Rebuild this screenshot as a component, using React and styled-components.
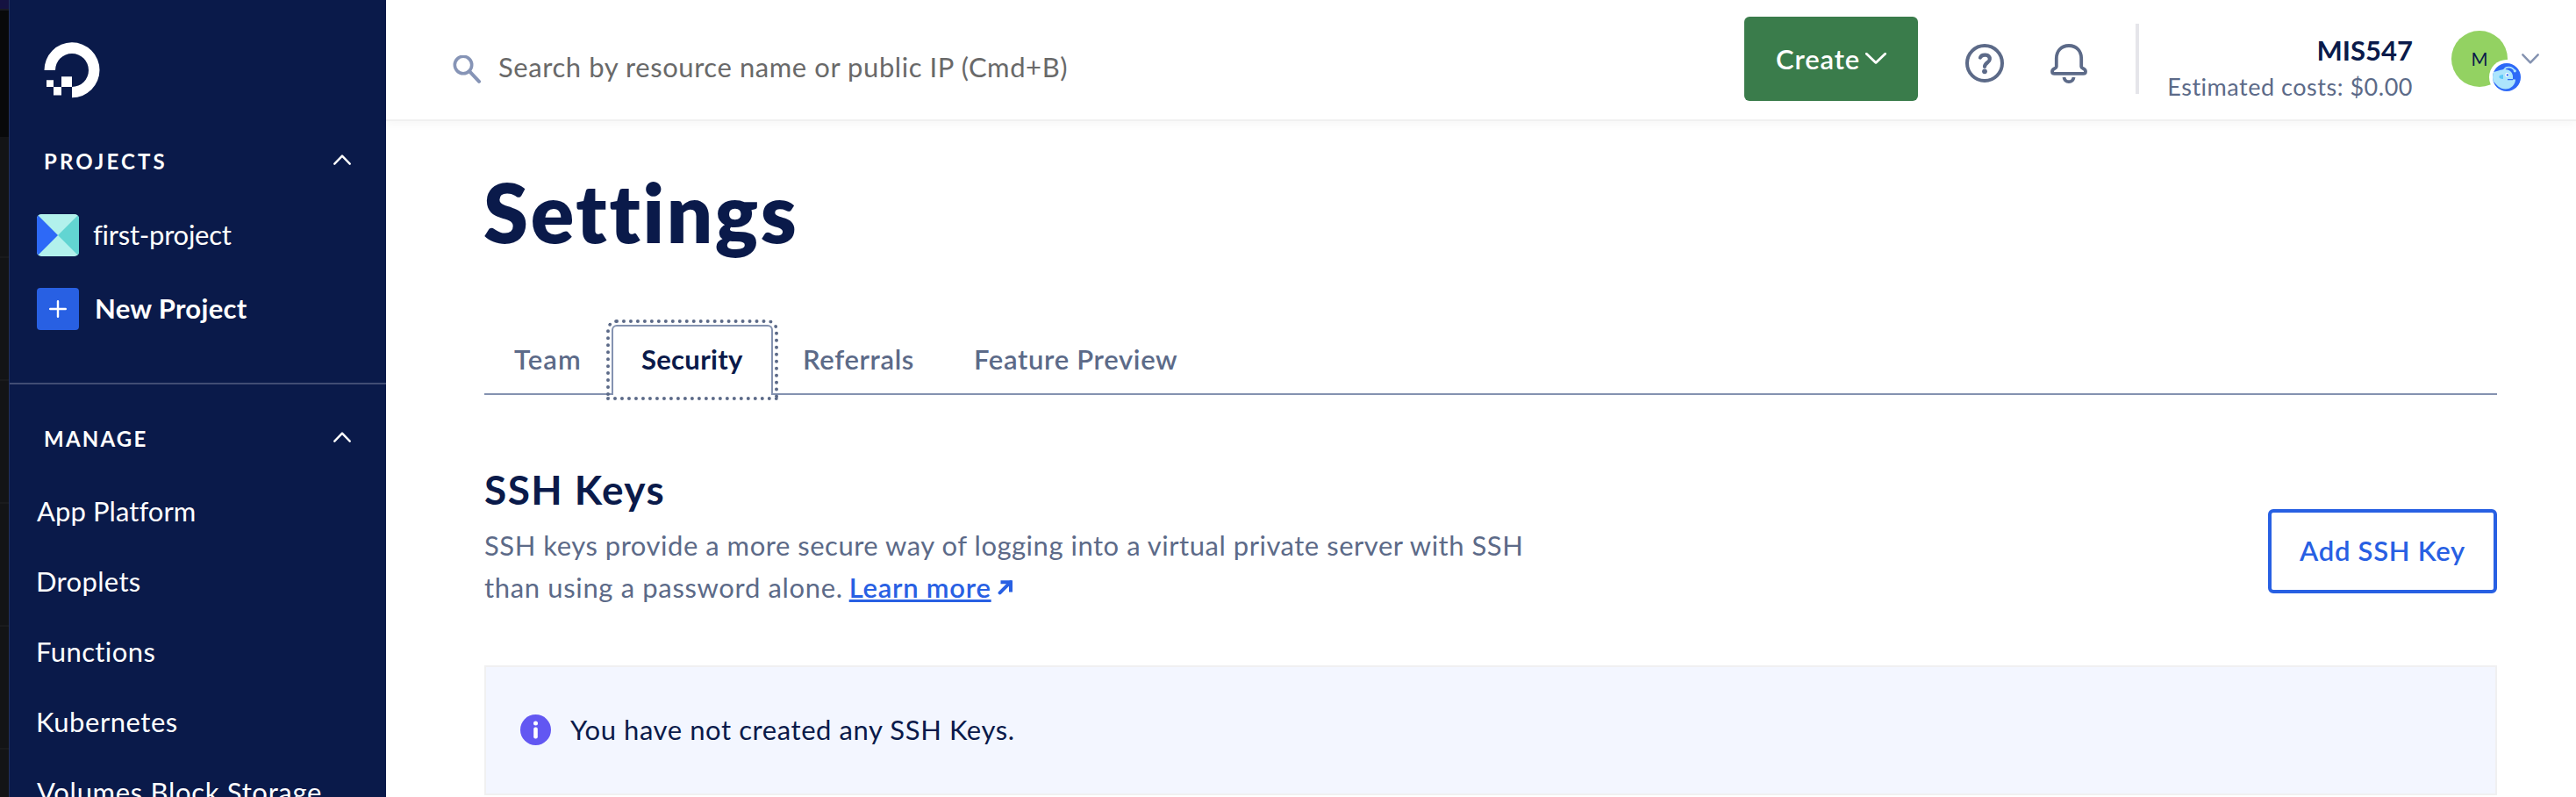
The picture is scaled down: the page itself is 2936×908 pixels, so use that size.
import React from "react";
import styled, { createGlobalStyle } from "styled-components";

const navy = "#0a1a4a";
const slate = "#5c6a88";
const steel = "#8492b0";
const blue = "#2860e3";

const GlobalStyle = createGlobalStyle`
  *, *::before, *::after { box-sizing: border-box; }
  html, body { margin: 0; background: #fff; }
  body {
    overflow: hidden;
    color: ${navy};
    font: 400 31px/48px Lato, "Open Sans", sans-serif;
  }
  h1, h2, p { margin: 0; }
  button, input { font: inherit; }
  svg { display: block; flex: none; }
`;

const Page = styled.div`
  display: flex;
  height: 908px;
  overflow: hidden;
`;

const Text = styled.span`
  font-weight: ${(p) => p.$weight || 400};
  letter-spacing: ${(p) => p.$track || 0}px;
  white-space: nowrap;
`;

/* ---------- sidebar ---------- */

const Edge = styled.div`
  flex: none;
  width: 10px;
  background:
    linear-gradient(#151241 0 10px, #191a22 10px 12px, #08090a 12px 156px, transparent 156px),
    repeating-linear-gradient(#131416 0 12px, #1a1b1d 12px 14px, #131416 14px 140px);
`;

const Sidebar = styled.aside`
  flex: none;
  display: flex;
  flex-direction: column;
  width: 430px;
  overflow: hidden;
  border-left: 1px solid #22315d;
  background: ${navy};
  color: #fff;
`;

const LogoLink = styled.a`
  display: block;
  padding: 48px 0 0 39px;
`;

const SectionHeader = styled.div`
  flex: none;
  display: flex;
  align-items: center;
  justify-content: space-between;
  height: 40px;
  margin-top: ${(p) => p.$top}px;
  padding: 1px 40px 0 39px;
  font-size: 24px;

  svg { margin-bottom: 3px; }
`;

const ProjectList = styled.div`
  display: flex;
  flex-direction: column;
  gap: 36px;
  padding: 41px 31px 60px;
  border-bottom: 2px solid #414d74;
`;

const ProjectRow = styled.a`
  display: flex;
  align-items: center;
  gap: ${(p) => p.$gap}px;
  height: 48px;

  span { padding-bottom: 2px; }
`;

const NewIcon = styled.div`
  display: grid;
  place-items: center;
  width: 48px;
  height: 48px;
  border-radius: 4px;
  background: ${blue};
`;

const NavList = styled.nav`
  display: flex;
  flex-direction: column;
  padding: 23px 0 0 31px;
`;

const NavItem = styled.a`
  flex: none;
  height: 80px;
  line-height: 80px;
  margin-left: ${(p) => p.$shift || 0}px;
`;

/* ---------- top bar ---------- */

const Content = styled.div`
  flex: 1;
  min-width: 0;
`;

const TopBar = styled.header`
  display: flex;
  align-items: center;
  height: 138px;
  padding: 0 42px 2px 76px;
  border-bottom: 2px solid #f0f0f0;
  box-shadow: 0 4px 10px rgba(0, 0, 0, 0.035);
`;

const Search = styled.label`
  flex: 1;
  display: flex;
  align-items: center;
  gap: 20px;
  padding-top: 18px;
  color: #696969;

  svg { margin-top: 5px; }
`;

const CreateButton = styled.button`
  display: flex;
  align-items: center;
  gap: 6px;
  width: 198px;
  height: 96px;
  padding: 0 0 1px 36px;
  border: 0;
  border-radius: 6px;
  background: #3a7c4b;
  color: #fff;

  svg { margin-bottom: 1px; }
`;

const IconButton = styled.a`
  margin: ${(p) => p.$margin};
`;

const Separator = styled.div`
  width: 4px;
  height: 80px;
  margin: 0 33px 0 55px;
  background: #e5e5ea;
`;

const Account = styled.div`
  display: flex;
  flex-direction: column;
  align-items: flex-end;
  width: 279px;
  margin: 21px 44px 0 0;
  line-height: 41px;
`;

const Costs = styled.div`
  color: ${slate};
  font-size: 27px;
`;

const Avatar = styled.div`
  position: relative;
  display: grid;
  place-items: center;
  width: 64px;
  height: 64px;
  margin-right: 16px;
  border-radius: 50%;
  background: #93d262;
  font-size: 20.5px;
  line-height: 24px;
`;

const Badge = styled.div`
  position: absolute;
  left: 43px;
  top: 33px;
  width: 40px;
  height: 40px;
  padding: 4px;
  border-radius: 50%;
  background: #fff;
`;

/* ---------- main area ---------- */

const Main = styled.main`
  padding: 54px 90px 0 111px;
`;

const Title = styled.h1`
  font-size: 92px;
  line-height: 100px;
`;

const Tabs = styled.div`
  display: flex;
  height: 80px;
  margin: 78px 0 0 1px;
  box-shadow: inset 0 -2px ${steel};
`;

const Tab = styled.a`
  width: ${(p) => p.$width}px;
  height: 80px;
  padding-left: 34px;
  color: ${slate};
  line-height: 78px;
`;

const ActiveTab = styled(Tab)`
  padding-left: 32px;
  border: 2px solid ${steel};
  border-bottom: 0;
  border-radius: 6px 6px 0 0;
  outline: 4px dotted ${slate};
  outline-offset: 2px;
  background: #fff;
  color: ${navy};
  line-height: 74px;
`;

const Section = styled.section`
  display: flex;
  align-items: flex-end;
  justify-content: space-between;
  margin: 80px 0 0 1px;
`;

const SectionTitle = styled.h2`
  font-size: 46px;
  line-height: 56px;
`;

const Description = styled.p`
  margin-top: 11px;
  color: ${slate};
`;

const Line = styled.span`
  display: flex;
  align-items: center;
`;

const LearnMore = styled.a`
  display: flex;
  align-items: center;
  gap: 7px;
  margin-left: 7px;
  color: ${blue};

  span {
    text-decoration: underline;
    text-decoration-thickness: 3px;
    text-underline-offset: 2px;
    text-decoration-skip-ink: none;
  }
`;

const OutlineButton = styled.button`
  width: 261px;
  height: 96px;
  margin-bottom: 17px;
  padding: 0 0 2px;
  border: 4px solid ${blue};
  border-radius: 6px;
  background: #fff;
  color: ${blue};
`;

const Notice = styled.div`
  display: flex;
  align-items: center;
  gap: 22px;
  height: 148px;
  margin: 65px 0 0 1px;
  padding: 0 0 1px 39px;
  border: 2px solid #f0f0f1;
  background: #f3f6ff;

  span { padding-bottom: 2px; }
`;

/* ---------- icons ---------- */

const Chevron = ({ up, width, height, color = "#fff", stroke = 2.4 }) => (
  <svg width={width} height={height} fill="none" stroke={color} strokeWidth={stroke} strokeLinecap="round" strokeLinejoin="round">
    {up ? (
      <path d={`M1.3 ${height - 1.3}L${width / 2} 1.6L${width - 1.3} ${height - 1.3}`} />
    ) : (
      <path d={`M1.3 1.3L${width / 2} ${height - 1.6}L${width - 1.3} 1.3`} />
    )}
  </svg>
);

const Logo = () => (
  <svg width="64" height="64" viewBox="0 0 64 64" fill="#fff">
    <path d="M.5 32A31.5 31.5 0 1 1 32 63.3V51A19 19 0 1 0 13 32Z" />
    <path d="M20 39.3h12V51H20zM11 51h9v9.5h-9zM3 43.3h8V51H3z" />
  </svg>
);

const ProjectIcon = () => (
  <svg width="48" height="48" viewBox="0 0 48 48">
    <clipPath id="tile"><rect width="48" height="48" rx="5" /></clipPath>
    <g clipPath="url(#tile)">
      <path fill="#b2f1ec" d="M0 0h48v48H0z" />
      <path fill="#2d69f7" d="M0 0l24 24L0 48z" />
      <path fill="#62d5d2" d="M48 0L24 24l24 24z" />
    </g>
  </svg>
);

const PlusIcon = () => (
  <svg width="20" height="20" stroke="#fff" strokeWidth="2.4" strokeLinecap="round">
    <path d="M10 1.2v17.6M1.2 10h17.6" />
  </svg>
);

const SearchIcon = () => (
  <svg width="32" height="32" fill="none" stroke="#8694b6" strokeWidth="3.6">
    <circle cx="12" cy="11" r="9.7" />
    <path d="M19 18.2L30 29.8" strokeWidth="4" strokeLinecap="round" />
  </svg>
);

const HelpIcon = () => (
  <svg width="44" height="44" fill="none" stroke={slate} strokeLinecap="round">
    <circle cx="22" cy="22" r="20" strokeWidth="4" />
    <path d="M17 15.6C18.4 11.6 27.8 11 27.8 17.4C27.8 21 22 21.6 22 26" strokeWidth="4.2" strokeLinejoin="round" />
    <circle cx="22" cy="31.3" r="2.9" fill={slate} stroke="none" />
  </svg>
);

const BellIcon = () => (
  <svg width="42" height="46" viewBox="0 0 42 46" fill="none" stroke={slate} strokeWidth="3.8" strokeLinejoin="round">
    <path d="M21 2C12 2 6.8 8.4 6.8 16.5V26C6.8 28.4 2 27.6 2 31.4C2 33 3 33.9 4.6 33.9H37.4C39 33.9 40 33 40 31.4C40 27.6 35.2 28.4 35.2 26V16.5C35.2 8.4 30 2 21 2Z" />
    <path d="M15.4 38C16 41.4 18.2 43.2 21 43.2S26 41.4 26.6 38" />
  </svg>
);

const FishIcon = () => (
  <svg width="32" height="32" viewBox="0 0 32 32">
    <clipPath id="fish"><circle cx="16" cy="16" r="16" /></clipPath>
    <g clipPath="url(#fish)">
      <path fill="#2d69f7" d="M0 0h32v32H0z" />
      <path fill="#ade5fc" d="M0 10C6 9.500 9 7 14 7C20 7 22.500 11 23 14.500V18.500H26C26 24.500 21 29.500 14.500 29.500C8 29.500 5 25 0 20Z" />
      <path fill="none" stroke="#ade5fc" strokeWidth="1.700" d="M13 7.500C15 3.500 22 3.500 25 8.500" />
      <circle cx="25.300" cy="8.800" r="1.600" fill="#ade5fc" />
      <path fill="#5cc8f8" d="M7.500 14.500Q9 13 12 13V18Q9 18 7.500 16.500Z" />
      <circle cx="16.600" cy="13.400" r="2.300" fill="#fff" />
      <circle cx="16.900" cy="13.400" r="1.200" fill="#2d69f7" />
      <path stroke="#2d69f7" strokeWidth="1.200" d="M17 18.600H23" />
    </g>
  </svg>
);

const ArrowIcon = () => (
  <svg width="18" height="18" viewBox="0 0 18 18" fill="none" stroke={blue} strokeWidth="4">
    <path d="M3.500 3.200H15V14.500" />
    <path d="M14.800 3.200L2.600 15.400" strokeLinecap="round" />
  </svg>
);

const InfoIcon = () => (
  <svg width="35" height="35" viewBox="0 0 35 35">
    <circle cx="17.500" cy="17.500" r="17.500" fill="#6257f2" />
    <circle cx="17.500" cy="9.900" r="2.500" fill="#fff" />
    <rect x="15.200" y="14.500" width="4.600" height="13" rx="2" fill="#fff" />
  </svg>
);

/* ---------- page ---------- */

const resources = [
  ["App Platform", 0.08, 0],
  ["Droplets", 0.33, -1],
  ["Functions", 0.4, -1],
  ["Kubernetes", 0.53, -1],
  ["Volumes Block Storage", 0.69, 0],
];

export default function App() {
  return (
    <Page>
      <GlobalStyle />
      <Edge />
      <Sidebar>
        <LogoLink><Logo /></LogoLink>
        <SectionHeader $top={51}>
          <Text $weight={700} $track={3.1}>PROJECTS</Text>
          <Chevron up width={20} height={12} />
        </SectionHeader>
        <ProjectList>
          <ProjectRow $gap={16}>
            <ProjectIcon />
            <Text $track={-0.25}>first-project</Text>
          </ProjectRow>
          <ProjectRow $gap={18}>
            <NewIcon><PlusIcon /></NewIcon>
            <Text $weight={700} $track={0.3}>New Project</Text>
          </ProjectRow>
        </ProjectList>
        <SectionHeader $top={41}>
          <Text $weight={700} $track={2.2}>MANAGE</Text>
          <Chevron up width={20} height={12} />
        </SectionHeader>
        <NavList>
          {resources.map(([label, track, shift]) => (
            <NavItem key={label} $shift={shift}><Text $track={track}>{label}</Text></NavItem>
          ))}
        </NavList>
      </Sidebar>

      <Content>
        <TopBar>
          <Search>
            <SearchIcon />
            <Text $track={0.57}>Search by resource name or public IP (Cmd+B)</Text>
          </Search>
          <CreateButton>
            <Text $weight={600} $track={0.85}>Create</Text>
            <Chevron width={24} height={13} stroke={2.8} />
          </CreateButton>
          <IconButton $margin="10px 0 0 54px"><HelpIcon /></IconButton>
          <IconButton $margin="11px 0 0 53px"><BellIcon /></IconButton>
          <Separator />
          <Account>
            <Text $weight={700}>MIS547</Text>
            <Costs><Text $track={0.52}>Estimated costs: $0.00</Text></Costs>
          </Account>
          <Avatar>
            <Text>M</Text>
            <Badge><FishIcon /></Badge>
          </Avatar>
          <Chevron width={20} height={12} color={steel} />
        </TopBar>

        <Main>
          <Title><Text $weight={800} $track={2.7}>Settings</Text></Title>
          <Tabs>
            <Tab $width={145}><Text $weight={600} $track={1.1}>Team</Text></Tab>
            <ActiveTab $width={184}><Text $weight={700} $track={0.3}>Security</Text></ActiveTab>
            <Tab $width={195}><Text $weight={600} $track={0.65}>Referrals</Text></Tab>
            <Tab $width={300}><Text $weight={600} $track={0.68}>Feature Preview</Text></Tab>
          </Tabs>

          <Section>
            <div>
              <SectionTitle><Text $weight={700} $track={1.4}>SSH Keys</Text></SectionTitle>
              <Description>
                <Line>
                  <Text $track={0.52}>SSH keys provide a more secure way of logging into a virtual private server with SSH</Text>
                </Line>
                <Line>
                  <Text $track={0.65}>than using a password alone.</Text>
                  <LearnMore>
                    <Text $weight={600} $track={0.75}>Learn more</Text>
                    <ArrowIcon />
                  </LearnMore>
                </Line>
              </Description>
            </div>
            <OutlineButton><Text $weight={600} $track={0.72}>Add SSH Key</Text></OutlineButton>
          </Section>

          <Notice>
            <InfoIcon />
            <Text $track={0.58}>You have not created any SSH Keys.</Text>
          </Notice>
        </Main>
      </Content>
    </Page>
  );
}
